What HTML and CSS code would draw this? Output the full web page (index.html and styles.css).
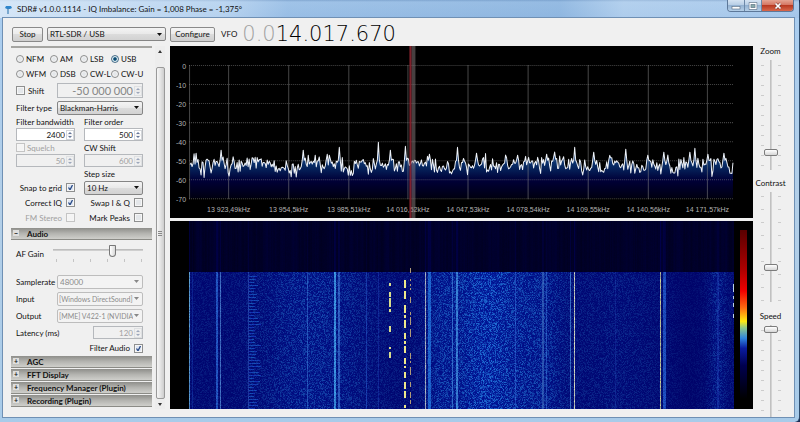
FILE: index.html
```
<!DOCTYPE html>
<html lang="en">
<head>
    <meta charset="utf-8">
    <meta name="viewport" content="width=device-width, initial-scale=1.0">
    <title>SDR#</title>
    <link rel="stylesheet" href="styles.css">
</head>
<body>
<div class="window">
    <header class="titlebar">
        <svg class="app-icon" viewBox="0 0 8 9" aria-hidden="true">
            <path d="M1 1h5l1 2-2 1H2L0 3z" fill="#2f86cc"/>
            <path d="M3 3v6" stroke="#3f7fb5" stroke-width="1.2"/>
        </svg>
        <h1>SDR# v1.0.0.1114 - IQ Imbalance: Gain = 1,008 Phase = -1,375°</h1>
        <div class="window-buttons">
            <button type="button" aria-label="Minimize"><svg viewBox="0 0 10 8"><rect x="1" y="4.500" width="8" height="2.500" fill="#fff" stroke="#56697f" stroke-width=".6"/></svg></button>
            <button type="button" aria-label="Maximize"><svg viewBox="0 0 10 8"><rect x="2" y="1.500" width="6" height="5" fill="#8aa" stroke="#56697f" stroke-width="2.400"/><rect x="2" y="1.500" width="6" height="5" fill="none" stroke="#fff" stroke-width="1.300"/></svg></button>
            <button type="button" class="close" aria-label="Close"><svg viewBox="0 0 10 8"><path d="M2.500 1.500l5 5M7.500 1.500l-5 5" stroke="#7c3a33" stroke-width="2.800"/><path d="M2.500 1.500l5 5M7.500 1.500l-5 5" stroke="#fff" stroke-width="1.700"/></svg></button>
        </div>
    </header>

    <main class="client">
        <div class="toolbar">
            <button type="button" class="btn btn-stop">Stop</button>
            <select class="combo source" aria-label="Source"><option>RTL-SDR / USB</option></select>
            <button type="button" class="btn btn-configure">Configure</button>
            <span class="vfo-label">VFO</span>
            <output class="vfo"><span class="dim">0.0</span>14.017.670</output>
        </div>

        <aside class="panel">
            <div class="section">
                <div class="modes">
                    <label><input type="radio" name="mode">NFM</label>
                    <label><input type="radio" name="mode">AM</label>
                    <label><input type="radio" name="mode">LSB</label>
                    <label><input type="radio" name="mode" checked>USB</label>
                    <label><input type="radio" name="mode">WFM</label>
                    <label><input type="radio" name="mode">DSB</label>
                    <label><input type="radio" name="mode">CW-L</label>
                    <label><input type="radio" name="mode">CW-U</label>
                </div>
                <div class="row shift-row">
                    <label><input type="checkbox">Shift</label>
                    <span class="spin off big"><input type="text" value="-50 000 000" aria-label="Shift value" disabled><i></i></span>
                </div>
                <div class="row">
                    <label for="filterType">Filter type</label>
                    <select class="combo" id="filterType"><option>Blackman-Harris</option></select>
                </div>
                <div class="pair">
                    <label for="bandwidth">Filter bandwidth</label>
                    <label for="order">Filter order</label>
                    <span class="spin"><input type="text" id="bandwidth" value="2400"><i></i></span>
                    <span class="spin"><input type="text" id="order" value="500"><i></i></span>
                    <label class="off"><input type="checkbox" disabled>Squelch</label>
                    <label for="cwShift">CW Shift</label>
                    <span class="spin off"><input type="text" value="50" aria-label="Squelch level" disabled><i></i></span>
                    <span class="spin off"><input type="text" id="cwShift" value="600" disabled><i></i></span>
                </div>
                <div class="pair checks">
                    <label class="step-label" for="step">Step size</label>
                    <label class="right">Snap to grid<input type="checkbox" checked></label>
                    <select class="combo" id="step"><option>10 Hz</option></select>
                    <label class="right">Correct IQ<input type="checkbox" checked></label>
                    <label class="right">Swap I &amp; Q<input type="checkbox"></label>
                    <label class="right off">FM Stereo<input type="checkbox" disabled></label>
                    <label class="right">Mark Peaks<input type="checkbox"></label>
                </div>
            </div>

            <button type="button" class="bar open">Audio</button>
            <div class="section audio">
                <div class="row gain">
                    <label for="gain">AF Gain</label>
                    <input type="range" id="gain" class="hslider" value="68">
                </div>
                <div class="row">
                    <label for="rate">Samplerate</label>
                    <select class="combo" id="rate" disabled><option>48000</option></select>
                </div>
                <div class="row">
                    <label for="input">Input</label>
                    <select class="combo device" id="input" disabled><option>[Windows DirectSound]</option></select>
                </div>
                <div class="row">
                    <label for="output">Output</label>
                    <select class="combo device" id="output" disabled><option>[MME] V422-1 (NVIDIA</option></select>
                </div>
                <div class="row latency">
                    <label for="latency">Latency (ms)</label>
                    <span class="spin off"><input type="text" id="latency" value="120" disabled><i></i></span>
                </div>
                <label class="right">Filter Audio<input type="checkbox" checked></label>
            </div>

            <button type="button" class="bar">AGC</button>
            <button type="button" class="bar">FFT Display</button>
            <button type="button" class="bar">Frequency Manager (Plugin)</button>
            <button type="button" class="bar">Recording (Plugin)</button>
        </aside>

        <div class="scrollbar" aria-hidden="true">
            <span class="arrow up"></span>
            <span class="thumb"></span>
            <span class="arrow down"></span>
        </div>

        <section class="display">
            <svg class="spectrum" id="spectrum" viewBox="0 0 582 172" role="img" aria-label="Spectrum">
                <defs>
                    <linearGradient id="fill" gradientUnits="userSpaceOnUse" x1="0" y1="100" x2="0" y2="152">
                        <stop offset="0" stop-color="#2060a8"/>
                        <stop offset=".4" stop-color="#06265e"/>
                        <stop offset=".65" stop-color="#000038"/>
                        <stop offset="1" stop-color="#000010"/>
                    </linearGradient>
                </defs>
                <path id="area" fill="url(#fill)"/>
                <g id="grid"></g>
                <path id="trace" fill="none" stroke="#eef2f8" stroke-width="1" stroke-linejoin="round"/>
                <rect x="241" y="0" width="4" height="172" fill="#8c8080" fill-opacity=".5"/>
                <rect x="239" y="0" width="2" height="172" fill="#8e2530" fill-opacity=".9"/>
            </svg>
            <div class="waterfall">
                <canvas id="waterfall"></canvas>
                <div class="legend"></div>
            </div>
        </section>

        <aside class="sliders">
            <label for="zoom">Zoom</label>
            <div class="track"><input type="range" id="zoom" value="86"></div>
            <label for="contrast">Contrast</label>
            <div class="track wide"><input type="range" id="contrast" value="70"></div>
            <label for="speed">Speed</label>
            <div class="track last"><input type="range" id="speed" value="1"></div>
        </aside>
    </main>
</div>
<script src="script.js"></script>
</body>
</html>
```
FILE: styles.css
```
* {box-sizing: border-box;}

body {
    margin: 0;
    font: 8px/10px Lato, "Liberation Sans", sans-serif;
    color: #111;
    background: #1a2d55;
}

button, input, select {
    font: inherit;
    color: inherit;
    margin: 0;
}

/* Glass frame */
.window {
    display: flex;
    flex-direction: column;
    min-height: 100vh;
    padding: 0 5px 5px 3px;
    background: linear-gradient(#a9cdf0, #b3cfe8 50%, #a8cbe9);
    border-right: 1px solid #2c4a6b;
    border-radius: 0 5px 5px 0;
}

.titlebar {
    display: flex;
    align-items: flex-start;
    height: 18px;
    margin: 0 -5px 0 -3px;
    padding: 0 5px;
    background:
        linear-gradient(90deg, rgba(225, 238, 250, .8), rgba(205, 225, 245, .5) 28%, rgba(140, 180, 222, .3) 36%, rgba(120, 165, 212, .4) 70%, rgba(190, 215, 240, .5) 78%, rgba(190, 215, 240, .2)),
        linear-gradient(#7fa3cc, #a9caec 2px, #9dc1e8);
}

.app-icon {
    width: 8px;
    height: 9px;
    margin: 5px 4px 0 0;
}

.titlebar h1 {
    flex: 1;
    margin: 0;
    font-size: 8px;
    font-weight: normal;
    line-height: 18px;
}

.window-buttons {
    display: flex;
    border: 1px solid #5d7899;
    border-top: 0;
    border-radius: 0 0 4px 4px;
    overflow: hidden;
}

.window-buttons button {
    display: flex;
    justify-content: center;
    align-items: center;
    width: 17px;
    height: 11px;
    padding: 0;
    border: 0;
    border-right: 1px solid #6c88a8;
    background: linear-gradient(#d5e3f2, #b4cbe4 50%, #94b2d2 50%, #b5cfe8);
}

.window-buttons svg {
    width: 10px;
    height: 8px;
}

.window-buttons .close {
    width: 31px;
    border: 0;
    background: linear-gradient(#e5a493, #d3705c 50%, #b93a22 50%, #d8684c);
}

/* Client area */
.client {
    flex: 1;
    display: grid;
    grid-template-columns: 141px 10px minmax(0, 1fr) 41px;
    grid-template-rows: 28px 1fr;
    padding-left: 8px;
    background: #f0f0f0;
    box-shadow: 0 0 0 1px #6f90b4;
}

.toolbar {
    grid-column: 1 / -1;
    display: flex;
    align-items: center;
    padding: 4px 0 0 1px;
}

.btn {
    height: 15px;
    padding: 0;
    border: 1px solid #8a8a8a;
    border-radius: 2px;
    background: linear-gradient(#f4f4f4, #ebebeb 50%, #dcdcdc 50%, #cfcfcf);
}

.btn-stop {width: 31px;}
.btn-configure {width: 45px;}

.combo {
    appearance: none;
    width: 100%;
    height: 14px;
    padding: 0 9px 0 2px;
    border: 1px solid #858585;
    border-radius: 2px;
    background:
        url("data:image/svg+xml,%3Csvg xmlns='http://www.w3.org/2000/svg' viewBox='0 0 5 3'%3E%3Cpath d='M0 0h5L2.500 3z' fill='%23111'/%3E%3C/svg%3E") right 3px center / 5px 3px no-repeat,
        linear-gradient(#f4f4f4, #e9e9e9 50%, #dcdcdc 50%, #d2d2d2);
    line-height: 10px;
    overflow: hidden;
}

.combo:disabled {
    opacity: 1;
    color: #8b8b8b;
    border-color: #bdbdbd;
    background:
        url("data:image/svg+xml,%3Csvg xmlns='http://www.w3.org/2000/svg' viewBox='0 0 5 3'%3E%3Cpath d='M0 0h5L2.500 3z' fill='%23888'/%3E%3C/svg%3E") right 3px center / 5px 3px no-repeat,
        #f3f3f3;
}

/* long device names */
.combo.device {
    padding-left: 1px;
    font-size: 7px;
}

.source {
    width: 119px;
    margin: 0 4px 0 4px;
}

.vfo-label {margin: 0 5px 0 6px;}

.vfo {
    font: 200 21px/22px "DejaVu Sans", sans-serif;
    color: #000;
}

.vfo .dim {color: #a0a0a0;}

/* Left settings panel */
.panel {
    border-top: 2px solid #a5a5a2;
    margin-bottom: 8px;
}

.section {padding: 3px 9px 3px 5px;}

.panel label {
    display: flex;
    align-items: center;
    white-space: nowrap;
}

.panel .off {color: #a0a0a0;}

.modes {
    display: grid;
    grid-template-columns: 34px 30px 31px 1fr;
    grid-auto-rows: 15px;
}

input[type="radio"],
input[type="checkbox"] {
    appearance: none;
    flex: none;
    width: 9px;
    height: 9px;
    margin-right: 2px;
    border: 1px solid #8e8f8f;
    background: #e4e7ea;
    box-shadow: inset 0 0 0 1px #f6f6f6;
}

input[type="radio"] {
    width: 8px;
    height: 8px;
    border-radius: 50%;
}

input[type="radio"]:checked {
    border-color: #4c6f88;
    background: radial-gradient(circle, #0c4a70 30%, #6fb9dc 60%);
}

input[type="checkbox"]:checked {
    background: #dfe6f2 url("data:image/svg+xml,%3Csvg xmlns='http://www.w3.org/2000/svg' viewBox='0 0 7 7'%3E%3Cpath d='M1.500 3.500l1.500 2.300L5.500 1' fill='none' stroke='%23294a86' stroke-width='1.300'/%3E%3C/svg%3E") center / 7px 7px no-repeat;
}

input[type="checkbox"]:disabled {
    border-color: #c4c4c4;
    background: #f4f4f4;
}

.right {justify-content: flex-end;}

.right input[type="checkbox"] {margin: 0 0 0 4px;}

.row {
    display: grid;
    grid-template-columns: 41px minmax(0, 1fr);
    align-items: center;
    height: 17px;
}

.shift-row {margin-top: 1px;}

.shift-row input[type="checkbox"] {margin-right: 3px;}

.spin {
    display: flex;
    align-items: center;
    min-width: 0;
    height: 13px;
    border: 1px solid #b5b8bc;
    background: #fff;
}

.spin.off {background: #f0f0f0;}

.spin input {
    flex: 1;
    width: 0;
    min-width: 0;
    height: 11px;
    padding: 0;
    border: 0;
    background: none;
    text-align: right;
}

/* up and down arrows of a number box */
.spin i {
    width: 8px;
    height: 10px;
    margin-left: 1px;
    border: 1px solid #d3d6da;
    background:
        url("data:image/svg+xml,%3Csvg xmlns='http://www.w3.org/2000/svg' viewBox='0 0 6 8'%3E%3Cpath d='M1 3l2-2 2 2zM1 5l2 2 2-2z' fill='%23667799'/%3E%3Cpath d='M0 4h6' stroke='%23cccccc' stroke-width='.5'/%3E%3C/svg%3E") center / 6px 8px no-repeat;
}

.spin.off i {opacity: .6;}

.spin.big {
    height: 15px;
    font-size: 11px;
    color: #858585;
}

.pair {
    display: grid;
    grid-template-columns: minmax(0, 1fr) minmax(0, 1fr);
    grid-template-rows: 12px 13px 13px 13px;
    column-gap: 9px;
}

.pair.checks {
    grid-template-rows: 12px 15px 15px 15px;
    align-items: center;
    padding-top: 1px;
}

.step-label {grid-column: 2;}

/* Collapsible section headers */
.bar {
    display: flex;
    align-items: center;
    width: 100%;
    height: 12px;
    margin-bottom: 1px;
    padding: 0 0 0 2px;
    border: 0;
    border-bottom: 1px solid #8b8b86;
    background: linear-gradient(#8e8e8a, #b4b4b0 50%, #cfcfcb);
    font-weight: bold;
    text-align: left;
}

.bar::before {
    content: "+";
    width: 6px;
    height: 6px;
    margin: 0 8px 2px 0;
    background: #dededc;
    font-size: 7px;
    line-height: 6px;
    text-align: center;
}

.bar.open::before {content: "\2212";}

.audio {padding: 3px 9px 1px 5px;}

.gain {
    grid-template-columns: 37px minmax(0, 1fr);
    height: 29px;
    align-items: start;
}

.gain label {padding-top: 5px;}

.hslider {
    appearance: none;
    width: 100%;
    height: 18px;
    background:
        linear-gradient(#b4b4b4, #d8d8d8) 0 5px / 100% 2px no-repeat,
        repeating-linear-gradient(90deg, #c4c4c4 0 1px, transparent 1px 17px) 3px 15px / 88px 3px no-repeat;
}

.hslider::-webkit-slider-thumb {
    appearance: none;
    width: 7px;
    height: 12px;
    margin-top: -5px;
    border: 1px solid #777;
    border-radius: 1px 1px 4px 4px;
    background: linear-gradient(90deg, #fff, #d8d8d8);
}

.latency {
    grid-template-columns: 77px minmax(0, 1fr);
}

.audio > .right {height: 14px;}

/* Fake scroll bar of the panel */
.scrollbar {
    display: flex;
    flex-direction: column;
    align-items: center;
    width: 10px;
    margin: 0 0 8px 3px;
    padding: 4px 0 3px;
    background: #ededed;
}

.arrow {
    border: 2px solid transparent;
}

.arrow.up {border-bottom: 3px solid #333; border-top: 0;}
.arrow.down {border-top: 3px solid #333; border-bottom: 0;}

.scrollbar .thumb {
    flex: 1;
    width: 9px;
    margin: 14px 0 4px;
    border: 1px solid #999;
    border-radius: 2px;
    background:
        repeating-linear-gradient(#888 0 1px, transparent 1px 2px) center / 4px 5px no-repeat,
        linear-gradient(90deg, #f6f6f6, #e4e4e4 50%, #cdcdcd);
}

/* Spectrum and waterfall */
.display {
    display: flex;
    flex-direction: column;
    gap: 3px;
    margin: 0 0 8px 8px;
}

.spectrum {
    display: block;
    width: 100%;
    background: #000;
}

.spectrum text {
    font: 7px "Liberation Sans", sans-serif;
    fill: #b4b4b4;
}

.spectrum .line {stroke: #8e8e8e; stroke-opacity: .5;}
.spectrum .dots {stroke: #8e8e8e; stroke-opacity: .5; stroke-dasharray: 1 1;}

.waterfall {
    flex: 1;
    display: flex;
    min-height: 150px;
    padding-left: 19px;
    background: #000;
}

/* the bitmap must not push the row taller */
.waterfall canvas {
    flex: 1;
    min-width: 0;
    contain: size;
}

.legend {
    width: 7px;
    margin: 9px 6px 10px 6px;
    background: linear-gradient(#5a0000, #b00000 24%, #f00000 36%, #ff6a10 46%, #ffe810 54%, #8cc88c 58%, #2f86e0 64%, #0a1ca0 70%, #000050 80%, #000018 94%, #000);
}

/* Right sliders */
.sliders {
    display: flex;
    flex-direction: column;
    align-items: center;
    padding-right: 6px;
    line-height: 11px;
}

.track {
    flex: none;
    width: 22px;
    height: 110px;
    margin: 3px 0 8px;
    background:
        repeating-linear-gradient(#cccccc 0 1px, transparent 1px 10px) 1px 5px / 3px 102px no-repeat,
        repeating-linear-gradient(#cccccc 0 1px, transparent 1px 10px) 18px 5px / 3px 102px no-repeat,
        linear-gradient(90deg, #b8b8b8, #dcdcdc) center / 2px 100% no-repeat;
}

.track.wide {
    margin-bottom: 9px;
    background:
        repeating-linear-gradient(#cccccc 0 1px, transparent 1px 13px) 1px 4px / 3px 105px no-repeat,
        repeating-linear-gradient(#cccccc 0 1px, transparent 1px 13px) 18px 4px / 3px 105px no-repeat,
        linear-gradient(90deg, #b8b8b8, #dcdcdc) center / 2px 100% no-repeat;
}

/* takes the height that is left, whatever the slider would ask for */
.track.last {
    flex: 1;
    contain: size;
    margin-bottom: 0;
    min-height: 60px;
}

.track input {
    appearance: none;
    writing-mode: vertical-lr;
    display: block;
    width: 22px;
    height: 100%;
    background: none;
}

.track input::-webkit-slider-thumb {
    appearance: none;
    width: 14px;
    height: 7px;
    border: 1px solid #7c7c7c;
    border-radius: 2px;
    background: linear-gradient(#fff, #d6d6d6);
}
```
FILE: script.js
```
// Small seeded generator so that the plots look the same on every load
let seed = 1114;
function rnd() {
    seed = (seed * 16807) % 2147483647;
    return seed / 2147483647;
}

const svgNS = "http://www.w3.org/2000/svg";
const grid = document.getElementById("grid");

function addLine(x1, y1, x2, y2, cls) {
    const line = document.createElementNS(svgNS, "line");
    line.setAttribute("x1", x1);
    line.setAttribute("y1", y1);
    line.setAttribute("x2", x2);
    line.setAttribute("y2", y2);
    line.setAttribute("class", cls);
    grid.appendChild(line);
}

function addText(x, y, anchor, str) {
    const text = document.createElementNS(svgNS, "text");
    text.setAttribute("x", x);
    text.setAttribute("y", y);
    text.setAttribute("text-anchor", anchor);
    text.textContent = str;
    grid.appendChild(text);
}

const freqs = ["13 923,49kHz", "13 954,5kHz", "13 985,51kHz", "14 016,52kHz", "14 047,53kHz",
    "14 078,54kHz", "14 109,55kHz", "14 140,56kHz", "14 171,57kHz"];

function drawGrid() {
    for (let i = 0; i <= 7; i++) {
        const y = 19.5 + i * 19;
        addLine(19, y, 563, y, "dots");
        addText(16, y + 3, "end", i === 0 ? "0" : String(-10 * i));
    }
    addLine(19.5, 19, 19.5, 153, "line");
    freqs.forEach((f, i) => {
        const x = Math.round(58 + i * 59.8) + 0.5;
        addLine(x, 19, x, 153, "line");
        addText(x, 166, "middle", f);
    });
}

// [x, y] of the carriers that stand out of the noise
const peaks = [[37, 113], [51, 104], [133, 104], [169, 101], [208, 96], [220, 104], [235, 100], [259, 108],
    [287, 101], [306, 107], [347, 109], [376, 108], [404, 101], [423, 106], [455, 103], [477, 109],
    [493, 106], [519, 106], [524, 102], [537, 108], [553, 107]];

function drawTrace() {
    const top = {};
    peaks.forEach(p => { top[p[0]] = p[1]; });
    let d = "";
    let drift = 0;
    for (let x = 20; x <= 562; x++) {
        drift = drift * 0.7 + (rnd() - 0.5) * 6;
        let y = 119 + drift + (rnd() + rnd() - 1) * 8;
        if (rnd() > 0.94) y += 5;
        if (rnd() > 0.94) y -= 5;
        if (top[x]) y = top[x];
        if (top[x - 1] || top[x + 1]) y = 114;
        d += (d ? "L" : "M") + x + " " + y.toFixed(1);
    }
    document.getElementById("trace").setAttribute("d", d);
    document.getElementById("area").setAttribute("d", d + "L562 152L20 152Z");
}

// Vertical signals of the waterfall: x, width, strength, colour
const signals = [
    [0, 1, 0.8, [110, 190, 230]], [3, 1, 0.3, [40, 90, 220]],
    [27, 2, 0.7, [50, 120, 230]], [31, 1, 0.75, [90, 150, 225]],
    [59, 1, 0.4, [80, 130, 230]], [118, 1, 0.5, [70, 140, 230]],
    [145, 2, 0.85, [70, 170, 240]], [149, 2, 0.65, [70, 130, 225]],
    [177, 1, 0.45, [50, 110, 230]], [189, 1, 0.3, [50, 90, 220]],
    [236, 1, 0.9, [190, 195, 200]], [239, 3, 0.75, [40, 130, 235]],
    [263, 1, 0.6, [80, 160, 240]], [267, 2, 0.7, [80, 170, 240]],
    [326, 1, 0.5, [60, 120, 230]], [353, 2, 0.6, [70, 120, 200]], [357, 1, 0.5, [70, 130, 230]],
    [381, 1, 0.7, [80, 150, 230]], [385, 1, 0.95, [215, 220, 190]],
    [426, 1, 0.2, [60, 100, 220]], [471, 1, 0.95, [200, 205, 150]], [474, 3, 0.75, [40, 105, 220]],
    [528, 2, 0.3, [50, 90, 210]]
];

// Noise floor at column x, 0..1
function floorLevel(x) {
    const bump = (c, w, a) => a * Math.exp(-((x - c) * (x - c)) / (w * w));
    return 0.12 + bump(105, 40, 0.12) + bump(150, 40, 0.1) + bump(298, 42, 0.32) + bump(250, 14, 0.12)
        + bump(355, 25, 0.13) + bump(425, 35, 0.05) + bump(528, 8, 0.12) - bump(500, 20, 0.05);
}

function drawWaterfall() {
    const canvas = document.getElementById("waterfall");
    const w = canvas.width = canvas.clientWidth;
    const h = canvas.height = canvas.clientHeight;
    const ctx = canvas.getContext("2d");
    const img = ctx.createImageData(w, h);
    const start = 51;
    const stripes = [];
    for (let x = 0; x < w; x++) stripes[x] = rnd() + (x ? stripes[x - 1] * 0.6 : 0);

    function put(x, y, r, g, b) {
        const i = (y * w + x) * 4;
        img.data[i] = r;
        img.data[i + 1] = g;
        img.data[i + 2] = b;
        img.data[i + 3] = 255;
    }

    for (let y = 0; y < h; y++) {
        for (let x = 0; x < w; x++) {
            if (y < start) {
                put(x, y, 0, 0, 26 + stripes[x] * 10 + rnd() * 4);
                continue;
            }
            const lvl = floorLevel(x);
            const n = Math.pow(rnd(), 2) * lvl * 2.1;
            put(x, y, n * 35, lvl * 40 + n * 105, 98 + lvl * 110 + n * 75);
        }
    }

    signals.forEach(([sx, sw, a, c]) => {
        for (let x = sx; x < sx + sw && x < w; x++) {
            for (let y = 0; y < h; y++) {
                const i = (y * w + x) * 4;
                if (y < start) {
                    img.data[i + 2] += a * 28;
                    continue;
                }
                const k = a * (0.7 + rnd() * 0.4);
                for (let j = 0; j < 3; j++) {
                    img.data[i + j] = img.data[i + j] * (1 - k) + c[j] * k;
                }
            }
        }
    });

    // horizontal ticks next to the weak digital signal
    for (let y = start + 4; y < h; y += 3) {
        const len = 4 + rnd() * 8;
        for (let x = 60; x < 60 + len; x++) put(x, y, 20, 40 + rnd() * 50, 180);
    }
    ctx.putImageData(img, 0, 0);

    // morse signals
    ctx.fillStyle = "#d8dc8c";
    [[62, 3], [71, 5], [77, 9], [88, 3], [105, 6], [126, 2], [131, 6]].forEach(p => ctx.fillRect(200, p[0], 2, p[1]));
    ctx.fillStyle = "#eee88a";
    [[59, 8], [70, 8], [84, 8], [94, 3], [99, 8], [112, 6], [120, 3], [125, 7], [137, 6], [145, 2], [151, 6],
        [161, 7], [170, 7], [184, 3]].forEach(p => ctx.fillRect(215, p[0], 2, p[1]));
    ctx.fillStyle = "#b09a78";
    [[47, 5], [58, 2], [63, 2], [67, 2], [76, 6], [91, 3], [96, 8], [108, 8], [132, 6], [140, 2], [146, 8],
        [161, 5], [171, 6], [179, 4]].forEach(p => ctx.fillRect(221, p[0], 1, p[1]));
    ctx.fillStyle = "#b8d0e8";
    [[63, 8], [75, 3], [82, 4], [93, 4]].forEach(p => ctx.fillRect(w - 1, p[0], 1, p[1]));
}

drawGrid();
drawTrace();
drawWaterfall();
window.addEventListener("resize", drawWaterfall);
```
